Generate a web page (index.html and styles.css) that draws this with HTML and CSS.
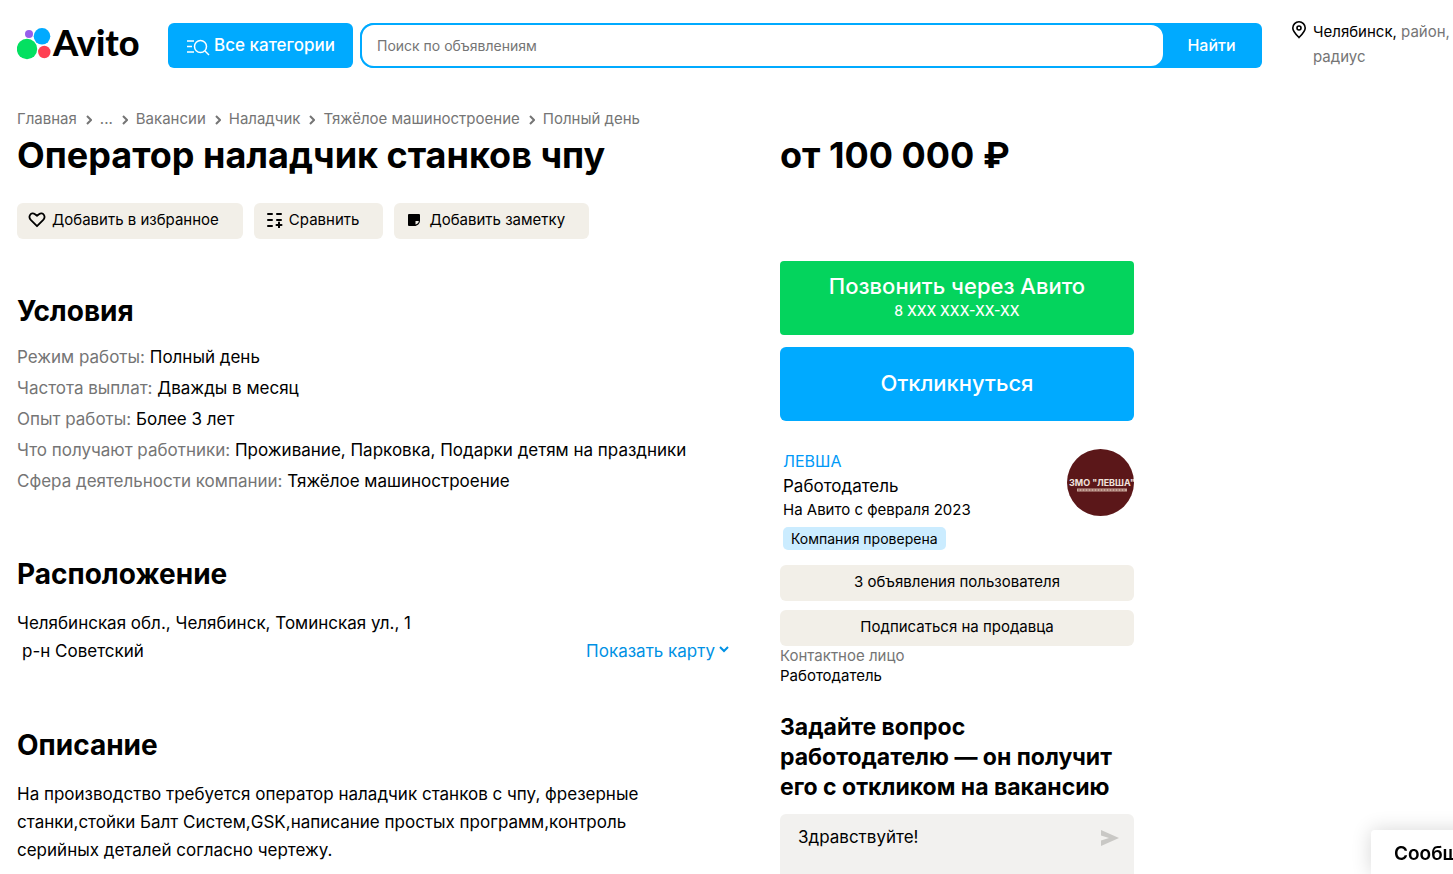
FILE: index.html
```html
<!DOCTYPE html>
<html lang="ru">
<head>
<meta charset="utf-8">
<meta name="viewport" content="width=device-width, initial-scale=1">
<title>Оператор наладчик станков чпу</title>
<link rel="stylesheet" href="styles.css">
</head>
<body>
<header class="header">
  <a class="logo" href="#" aria-label="Avito">
    <svg class="logo-mark" viewBox="0 0 34 32" aria-hidden="true">
      <circle cx="10" cy="21" r="10.2" fill="#04e061"/>
      <circle cx="25" cy="8.300" r="8.300" fill="#00aaff"/>
      <circle cx="27.300" cy="24" r="6.200" fill="#ff4053"/>
      <circle cx="12" cy="6" r="4" fill="#965eeb"/>
    </svg>
    <span>Avito</span>
  </a>
  <button class="categories" type="button">
    <svg viewBox="0 0 24 18" aria-hidden="true" fill="none" stroke="currentColor" stroke-width="1.500"><path d="M1 3h7M1 8.500h5M1 14h7"/><circle cx="14.500" cy="8.500" r="6"/><path d="m19 13 4 4"/></svg>
    <span>Все категории</span>
  </button>
  <form class="search">
    <input type="search" placeholder="Поиск по объявлениям" aria-label="Поиск по объявлениям">
    <button type="button">Найти</button>
  </form>
  <a class="place" href="#">
    <svg viewBox="0 0 16 18" aria-hidden="true" fill="none" stroke="currentColor" stroke-width="1.600"><path d="M8 16.500C5 13.500 1.800 10.500 1.800 7a6.200 6.200 0 0 1 12.400 0c0 3.500-3.200 6.500-6.200 9.500Z"/><circle cx="8" cy="7" r="2"/></svg>
    <span>Челябинск, <span class="muted">район, радиус</span></span>
  </a>
</header>

<main class="page">
  <nav class="crumbs" aria-label="Навигация">
    <a href="#">Главная</a><svg viewBox="0 0 6 10"><path d="m1 1 4 4-4 4"/></svg>
    <a href="#">...</a><svg viewBox="0 0 6 10"><path d="m1 1 4 4-4 4"/></svg>
    <a href="#">Вакансии</a><svg viewBox="0 0 6 10"><path d="m1 1 4 4-4 4"/></svg>
    <a href="#">Наладчик</a><svg viewBox="0 0 6 10"><path d="m1 1 4 4-4 4"/></svg>
    <a href="#">Тяжёлое машиностроение</a><svg viewBox="0 0 6 10"><path d="m1 1 4 4-4 4"/></svg>
    <a href="#">Полный день</a>
  </nav>
  <div class="columns">
    <div class="content">
      <h1 class="title">Оператор наладчик станков чпу</h1>
      <div class="actions">
        <button class="soft" type="button">
          <svg viewBox="0 0 18 16" fill="none" stroke="currentColor" stroke-width="1.800" stroke-linejoin="round" aria-hidden="true"><path d="M9 14.200 3 8.200C-.6 4.400 3.200-.6 7 2.200l2 1.600 2-1.600c3.800-2.800 7.600 2.200 4 6Z"/></svg>
          <span>Добавить в избранное</span>
        </button>
        <button class="soft" type="button">
          <svg viewBox="0 0 18 16" fill="none" stroke="currentColor" stroke-width="2" stroke-linecap="round" aria-hidden="true"><path d="M3 2h4M3 8h4M3 14h4M12 2h4M12 8h4M14 10.500v5M11.500 13h5"/></svg>
          <span>Сравнить</span>
        </button>
        <button class="soft" type="button">
          <svg viewBox="0 0 18 16" aria-hidden="true"><path fill="currentColor" fill-rule="evenodd" d="M4 2h10q1 0 1 1v5.500c0 3-2.500 5.500-5.500 5.500H4q-1 0-1-1V3q0-1 1-1Zm9.800 7h-3.300v3.600c1.900-.4 3.300-1.800 3.300-3.600Z"/></svg>
          <span>Добавить заметку</span>
        </button>
      </div>

      <section class="section">
        <h2>Условия</h2>
        <ul class="params">
          <li><span class="muted">Режим работы:</span> Полный день</li>
          <li><span class="muted">Частота выплат:</span> Дважды в месяц</li>
          <li><span class="muted">Опыт работы:</span> Более 3 лет</li>
          <li><span class="muted">Что получают работники:</span> Проживание, Парковка, Подарки детям на праздники</li>
          <li><span class="muted">Сфера деятельности компании:</span> Тяжёлое машиностроение</li>
        </ul>
      </section>

      <section class="section">
        <h2>Расположение</h2>
        <div class="location">
          <div>
            <div>Челябинская обл., Челябинск, Томинская ул., 1</div>
            <div class="district">р-н Советский</div>
          </div>
          <a class="map-link" href="#">Показать карту<svg viewBox="0 0 10 7" aria-hidden="true"><path d="m1 1 4 4 4-4"/></svg></a>
        </div>
      </section>

      <section class="section">
        <h2>Описание</h2>
        <p class="description">На производство требуется оператор наладчик станков с чпу, фрезерные станки,стойки Балт Систем,GSK,написание простых программ,контроль серийных деталей согласно чертежу.</p>
      </section>
    </div>

    <aside class="side">
      <div class="title">от 100 000 ₽</div>
      <div class="contact">
        <button class="cta call" type="button"><span>Позвонить через Авито</span><small>8 XXX XXX-XX-XX</small></button>
        <button class="cta respond" type="button">Откликнуться</button>
      </div>
      <div class="seller">
        <div class="seller-info">
          <a href="#">ЛЕВША</a>
          <div class="role">Работодатель</div>
          <div class="since">На Авито с февраля 2023</div>
          <span class="badge">Компания проверена</span>
        </div>
        <svg class="avatar" viewBox="0 0 67 67" role="img" aria-label="ЗМО Левша">
          <circle cx="33.500" cy="33.500" r="33.500" fill="#5b1719"/>
          <text x="35" y="37" text-anchor="middle">ЗМО "ЛЕВША"</text>
          <path d="M10 41h50" stroke="#c9a89c" stroke-width="3"/>
          <path d="M11 41h48" stroke="#8f5d57" stroke-width="1" stroke-dasharray="2 1"/>
        </svg>
      </div>
      <div class="seller-actions">
        <button class="soft wide" type="button">3 объявления пользователя</button>
        <button class="soft wide" type="button">Подписаться на продавца</button>
      </div>
      <div class="person"><div class="muted">Контактное лицо</div><div>Работодатель</div></div>
      <h3 class="ask-title"><label for="question">Задайте вопрос работодателю — он получит его с откликом на вакансию</label></h3>
      <form class="ask">
        <textarea id="question" rows="3">Здравствуйте!</textarea>
        <button type="button" aria-label="Отправить"><svg viewBox="0 0 20 18" aria-hidden="true"><path d="M1 1 19 9 1 17V11.500L9 9 1 6.500Z" fill="#c9c8c5"/></svg></button>
      </form>
    </aside>
  </div>
</main>
<button class="messenger" type="button">Сообщения</button>
</body>
</html>
```

FILE: styles.css
```css
* { box-sizing: border-box; }
html { height: 100%; }
body {
  height: 100%;
  margin: 0;
  overflow: hidden;
  background: #fff;
  color: #000;
  font: 16px/24px Inter, "Open Sans", sans-serif;
}
a { color: inherit; text-decoration: none; }
button, input, textarea { font: inherit; color: inherit; border: 0; margin: 0; }
button { cursor: pointer; }
h1, h2, h3, p, ul { margin: 0; padding: 0; }
.muted { color: #757575; }

.header { display: flex; align-items: flex-start; padding: 19px 0 0 17px; }
.logo {
  display: flex;
  flex: none;
  gap: 2px;
  width: 151px;
  padding-top: 3px;
  font: 900 36px/40px Lato, sans-serif;
}
.logo-mark { width: 34px; height: 32px; margin-top: 6px; }
.categories {
  display: flex;
  flex: none;
  align-items: center;
  justify-content: center;
  gap: 4px;
  width: 185px;
  height: 45px;
  margin: 4px 7px 0 0;
  padding: 0 0 2px;
  border-radius: 6px;
  background: #00aaff;
  color: #fff;
  font-size: 17px;
  font-weight: 500;
}
.categories svg { width: 24px; height: 18px; margin-top: 4px; }
.search {
  display: flex;
  flex: 1;
  height: 45px;
  margin-top: 4px;
  border-radius: 14px 6px 6px 14px;
  background: #00aaff;
}
.search input {
  flex: 1;
  min-width: 0;
  padding: 0 15px;
  border: 2px solid #00aaff;
  border-radius: 14px;
  background: #fff;
  font-size: 14px;
  outline: 0;
}
.search input::placeholder { color: #757575; opacity: 1; }
.search button {
  width: 97px;
  padding: 0 4px 2px 0;
  background: none;
  color: #fff;
  font-weight: 500;
}
.place { display: flex; flex: none; gap: 6px; width: 162px; margin-left: 29px; font-size: 15px; line-height: 25px; }
.place svg { flex: none; width: 16px; height: 18px; margin-top: 2px; }

.page { max-width: 1151px; padding: 39px 17px 0; }
.crumbs { display: flex; align-items: center; color: #757575; font-size: 15px; line-height: 22px; }
.crumbs svg { width: 6px; height: 10px; margin: 2px 8px 0 9px; fill: none; stroke: #757575; stroke-width: 2; }
.columns { display: grid; grid-template-columns: minmax(0, 712fr) minmax(0, 354fr); gap: 51px; }
.title { font-size: 36px; font-weight: 700; line-height: 50px; white-space: nowrap; }
.actions { display: flex; gap: 11px; margin-top: 23px; }
.soft {
  display: flex;
  align-items: center;
  gap: 6px;
  height: 36px;
  padding: 0 24px 2px 11px;
  border-radius: 6px;
  background: #f2efe8;
  font-size: 15px;
}
.soft svg { width: 18px; height: 16px; }
.section { padding-top: 53px; }
.section h2 { font-size: 28px; font-weight: 700; line-height: 38px; }
.params { padding: 12px 0 5px; list-style: none; font-size: 17px; line-height: 31px; }
.location { display: flex; justify-content: space-between; align-items: flex-end; padding: 16px 0 8px; font-size: 17px; line-height: 28px; }
.district { padding-left: 5px; }
.map-link { color: #0091e4; white-space: nowrap; }
.map-link svg { width: 10px; height: 7px; margin: 0 0 4px 4px; fill: none; stroke: #0091e4; stroke-width: 2; }
.description { max-width: 660px; padding-top: 16px; font-size: 17px; line-height: 28px; }

.contact { display: grid; gap: 12px; margin-top: 81px; }
.cta {
  display: flex;
  flex-direction: column;
  align-items: center;
  justify-content: center;
  height: 74px;
  padding: 0 0 2px;
  border-radius: 6px;
  color: #fff;
  font-size: 22px;
  font-weight: 500;
  line-height: 28px;
}
.call { border-radius: 4px; background: #04d45d; }
.call small { font-size: 14px; line-height: 22px; }
.respond { background: #00aaff; }
.seller { display: flex; justify-content: space-between; padding: 28px 0 14px 3px; }
.seller-info { font-size: 15px; line-height: 24px; }
.seller-info a { color: #0099f7; font-size: 16px; }
.role { font-size: 17px; }
.badge { display: inline-block; margin-top: 5px; padding: 0 8px; border-radius: 5px; background: #cbecff; font-size: 14px; line-height: 23px; }
.avatar { width: 67px; height: 67px; }
.avatar text { font: 700 9px Inter, sans-serif; fill: #f0e2dc; }
.seller-actions { display: grid; gap: 9px; }
.wide { justify-content: center; padding: 0 0 2px; }
.person { font-size: 15px; line-height: 20px; }
.ask-title { margin-top: 26px; font-size: 23px; font-weight: 700; line-height: 30px; }
.ask { display: flex; align-items: flex-start; margin-top: 12px; border-radius: 6px; background: #f2f1ef; }
.ask textarea { flex: 1; min-width: 0; padding: 9px 18px; background: none; font-size: 17px; line-height: 28px; resize: none; outline: 0; }
.ask button { padding: 15px 14px 0 0; background: none; line-height: 0; }
.ask svg { width: 20px; height: 18px; }

.messenger {
  position: fixed;
  right: -118px;
  bottom: 0;
  width: 200px;
  height: 44px;
  padding: 3px 0 0 23px;
  border-radius: 4px 4px 0 0;
  background: #fff;
  box-shadow: 0 0 20px rgba(0, 0, 0, .16);
  font-size: 19px;
  font-weight: 600;
  text-align: left;
}
```
